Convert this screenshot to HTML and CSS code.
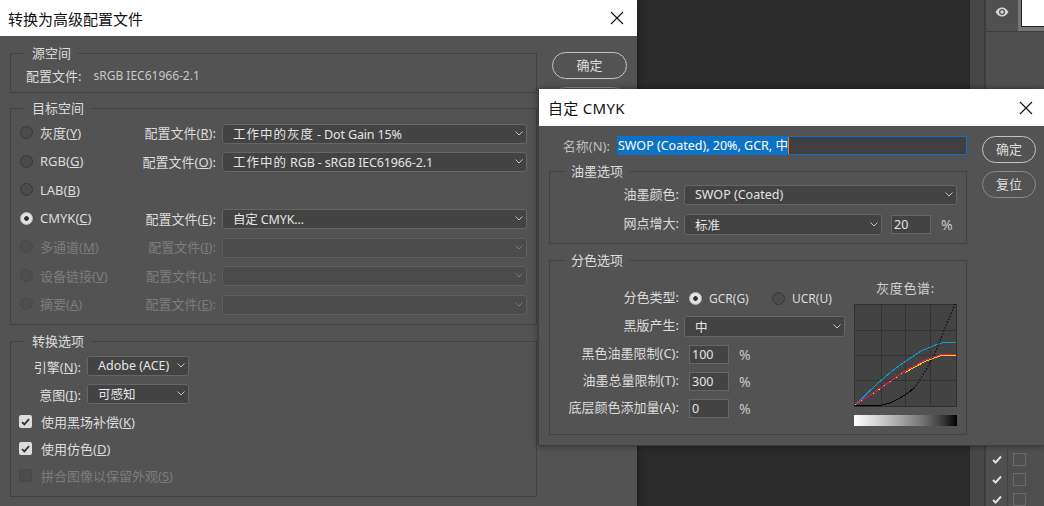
FILE: index.html
```html
<!DOCTYPE html>
<html lang="zh">
<head>
<meta charset="utf-8">
<title>转换为高级配置文件</title>
<link rel="stylesheet" href="styles.css">
</head>
<body>
<div class="desktop">
  <div class="canvas"></div>
  <div class="gutter"></div>
  <aside class="layers">
    <div class="layer-row">
      <div class="eye-cell">
        <svg class="eye" viewBox="0 0 14 10" width="14" height="10"><path d="M0.5 5C2.5 1.8 4.6 0.5 7 0.5S11.5 1.8 13.5 5C11.5 8.2 9.4 9.5 7 9.5S2.5 8.2 0.5 5Z" fill="#d8d8d8"/><circle cx="7" cy="5" r="3" fill="#535353"/><circle cx="7" cy="5" r="1.7" fill="#d8d8d8"/></svg>
      </div>
      <div class="thumb-cell"><div class="thumb"></div></div>
    </div>
    <div class="layer-space"></div>
    <div class="check-row"><div class="tick-cell"><svg viewBox="0 0 10 9" width="10" height="9"><path d="M1 5L3.6 7.5L9 1.5" class="tick"/></svg></div><div class="box-cell"><span class="empty-box"></span></div></div>
    <div class="check-row"><div class="tick-cell"><svg viewBox="0 0 10 9" width="10" height="9"><path d="M1 5L3.6 7.5L9 1.5" class="tick"/></svg></div><div class="box-cell"><span class="empty-box"></span></div></div>
    <div class="check-row"><div class="tick-cell"><svg viewBox="0 0 10 9" width="10" height="9"><path d="M1 5L3.6 7.5L9 1.5" class="tick"/></svg></div><div class="box-cell"><span class="empty-box"></span></div></div>
  </aside>

  <section class="window convert">
    <header class="titlebar convert-title">
      <span class="title-text">转换为高级配置文件</span>
      <svg class="close" viewBox="0 0 14 14" width="14" height="14"><path d="M1 1L13 13M13 1L1 13"/></svg>
    </header>
    <div class="convert-body">
      <div class="convert-main">
        <fieldset class="group source">
          <legend>源空间</legend>
          <div class="source-row"><span>配置文件:</span><span class="source-value">sRGB IEC61966-2.1</span></div>
        </fieldset>
        <fieldset class="group target">
          <legend>目标空间</legend>
          <div class="target-row">
            <span class="choice"><span class="radio"></span><span>灰度(<u>Y</u>)</span></span>
            <span class="profile-label">配置文件(<u>R</u>):</span>
            <div class="select wide"><span><span class="cjk">工作中的灰度</span> - Dot Gain 15%</span><svg class="chev" viewBox="0 0 8 5" width="8" height="5"><path d="M0.5 0.5L4 4L7.5 0.5"/></svg></div>
          </div>
          <div class="target-row">
            <span class="choice"><span class="radio"></span><span>RGB(<u>G</u>)</span></span>
            <span class="profile-label">配置文件(<u>O</u>):</span>
            <div class="select wide"><span><span class="cjk">工作中的</span> RGB - sRGB IEC61966-2.1</span><svg class="chev" viewBox="0 0 8 5" width="8" height="5"><path d="M0.5 0.5L4 4L7.5 0.5"/></svg></div>
          </div>
          <div class="target-row">
            <span class="choice"><span class="radio"></span><span>LAB(<u>B</u>)</span></span>
          </div>
          <div class="target-row">
            <span class="choice"><span class="radio on"></span><span>CMYK(<u>C</u>)</span></span>
            <span class="profile-label">配置文件(<u>E</u>):</span>
            <div class="select wide"><span>自定 CMYK...</span><svg class="chev" viewBox="0 0 8 5" width="8" height="5"><path d="M0.5 0.5L4 4L7.5 0.5"/></svg></div>
          </div>
          <div class="target-row off">
            <span class="choice"><span class="radio"></span><span>多通道(<u>M</u>)</span></span>
            <span class="profile-label">配置文件(<u>I</u>):</span>
            <div class="select wide"><span></span><svg class="chev" viewBox="0 0 8 5" width="8" height="5"><path d="M0.5 0.5L4 4L7.5 0.5"/></svg></div>
          </div>
          <div class="target-row off">
            <span class="choice"><span class="radio"></span><span>设备链接(<u>V</u>)</span></span>
            <span class="profile-label">配置文件(<u>L</u>):</span>
            <div class="select wide"><span></span><svg class="chev" viewBox="0 0 8 5" width="8" height="5"><path d="M0.5 0.5L4 4L7.5 0.5"/></svg></div>
          </div>
          <div class="target-row off">
            <span class="choice"><span class="radio"></span><span>摘要(<u>A</u>)</span></span>
            <span class="profile-label">配置文件(<u>E</u>):</span>
            <div class="select wide"><span></span><svg class="chev" viewBox="0 0 8 5" width="8" height="5"><path d="M0.5 0.5L4 4L7.5 0.5"/></svg></div>
          </div>
        </fieldset>
        <fieldset class="group options">
          <legend>转换选项</legend>
          <div class="option-row">
            <span class="option-label">引擎(<u>N</u>):</span>
            <div class="select narrow"><span>Adobe (ACE)</span><svg class="chev" viewBox="0 0 8 5" width="8" height="5"><path d="M0.5 0.5L4 4L7.5 0.5"/></svg></div>
          </div>
          <div class="option-row">
            <span class="option-label">意图(<u>I</u>):</span>
            <div class="select narrow"><span>可感知</span><svg class="chev" viewBox="0 0 8 5" width="8" height="5"><path d="M0.5 0.5L4 4L7.5 0.5"/></svg></div>
          </div>
          <div class="check-line"><span class="check"><svg viewBox="0 0 9 8" width="9" height="8"><path d="M1 4.2L3.4 6.4L8 1.2"/></svg></span><span>使用黑场补偿(<u>K</u>)</span></div>
          <div class="check-line"><span class="check"><svg viewBox="0 0 9 8" width="9" height="8"><path d="M1 4.2L3.4 6.4L8 1.2"/></svg></span><span>使用仿色(<u>D</u>)</span></div>
          <div class="check-line off"><span class="check blank"></span><span>拼合图像以保留外观(<u>S</u>)</span></div>
        </fieldset>
      </div>
      <div class="convert-actions">
        <button class="btn primary">确定</button>
        <button class="btn" aria-label="复位"></button>
      </div>
    </div>
  </section>

  <section class="window cmyk">
    <header class="titlebar cmyk-title">
      <span class="title-text">自定 CMYK</span>
      <svg class="close" viewBox="0 0 14 14" width="14" height="14"><path d="M1 1L13 13M13 1L1 13"/></svg>
    </header>
    <div class="cmyk-body">
      <div class="cmyk-main">
        <div class="name-row">
          <span class="name-label">名称(N):</span>
          <div class="name-input"><span class="selected">SWOP (Coated), 20%, GCR, 中</span><span class="caret"></span></div>
        </div>
        <fieldset class="group ink">
          <legend>油墨选项</legend>
          <div class="form-row">
            <span class="form-label">油墨颜色:</span>
            <div class="select ink-select"><span>SWOP (Coated)</span><svg class="chev" viewBox="0 0 8 5" width="8" height="5"><path d="M0.5 0.5L4 4L7.5 0.5"/></svg></div>
          </div>
          <div class="form-row dot-row">
            <span class="form-label">网点增大:</span>
            <div class="select dot-select"><span>标准</span><svg class="chev" viewBox="0 0 8 5" width="8" height="5"><path d="M0.5 0.5L4 4L7.5 0.5"/></svg></div>
            <div class="num dot-num">20</div>
            <span class="pct">%</span>
          </div>
        </fieldset>
        <fieldset class="group sep">
          <legend>分色选项</legend>
          <div class="sep-layout">
            <div class="sep-form">
              <div class="form-row h20">
                <span class="form-label">分色类型:</span>
                <span class="radio-option"><span class="radio on"></span><span>GCR(G)</span></span>
                <span class="radio-option"><span class="radio"></span><span>UCR(U)</span></span>
              </div>
              <div class="form-row">
                <span class="form-label">黑版产生:</span>
                <div class="select black-select"><span>中</span><svg class="chev" viewBox="0 0 8 5" width="8" height="5"><path d="M0.5 0.5L4 4L7.5 0.5"/></svg></div>
              </div>
              <div class="form-row">
                <span class="form-label">黑色油墨限制(C):</span>
                <div class="num limit">100</div><span class="pct">%</span>
              </div>
              <div class="form-row">
                <span class="form-label">油墨总量限制(T):</span>
                <div class="num limit">300</div><span class="pct">%</span>
              </div>
              <div class="form-row">
                <span class="form-label">底层颜色添加量(A):</span>
                <div class="num limit">0</div><span class="pct">%</span>
              </div>
            </div>
            <div class="gamut">
              <div class="gamut-label">灰度色谱:</div>
              <svg class="graph" viewBox="0 0 103 103" width="103" height="103">
                <rect x="0.5" y="0.5" width="102" height="102" class="g-frame"/>
                <path d="M27.5 0V103M51.5 0V103M76.5 0V103M0 26.5H103M0 51.5H103M0 76.5H103" class="g-grid"/>
                <polyline points="1,101 24,79 37,68 49,59 67,47 84,40 92,38 102,38" class="g-cyan"/>
                <polyline points="51,68.5 71,57.5 87,51.5 94,51.5 102,51.5" class="g-yellow"/>
                <polyline points="1,101 24,86 51,67 71,56 87,50.5 94,50.5 102,50.5" class="g-magenta"/>
                <polyline points="1,101 24,86 51,67" class="g-yellow dashed"/>
                <polyline points="1,101.5 26,101.5 36,99 46,94 54,89 60,84" class="g-black"/>
                <polyline points="60,84 64,79 72,66 81,49 91,24 101,0" class="g-dots"/>
              </svg>
              <div class="ramp"></div>
            </div>
          </div>
        </fieldset>
      </div>
      <div class="cmyk-actions">
        <button class="btn small primary">确定</button>
        <button class="btn small">复位</button>
      </div>
    </div>
  </section>
</div>
</body>
</html>
```
FILE: styles.css
```css
* { box-sizing: border-box; }
html, body { margin: 0; padding: 0; }
body {
  width: 1044px;
  height: 506px;
  overflow: hidden;
  background: #292929;
  font-family: "Noto Sans", "Noto Sans CJK SC", sans-serif;
  font-size: 13px;
  color: #dcdcdc;
}
u { text-decoration: underline; text-underline-offset: 1px; }

.desktop {
  position: relative;
  width: 1044px;
  height: 506px;
  overflow: hidden;
  display: flex;
  justify-content: flex-end;
}
.canvas { flex: 1; background: #2a2a2a; }
.gutter { width: 16px; background: #474747; border-right: 2px solid #3b3b3b; }
.layers {
  width: 58px;
  height: 509px;
  flex: none;
  background: #4f4f4f;
  display: flex;
  flex-direction: column;
}
.layer-row { height: 32px; display: flex; border-bottom: 1px solid #3e3e3e; flex: none; }
.eye-cell { width: 32px; display: flex; align-items: center; justify-content: center; padding-bottom: 7px; background: #505050; }
.thumb-cell { flex: 1; background: #777; padding: 0 0 4px 3px; }
.thumb { height: 100%; background: #fff; border: 1px solid #222; border-top: 0; border-right: 0; }
.layer-space { flex: 1; }
.check-row { height: 20px; display: flex; flex: none; }
.tick-cell { width: 22px; display: flex; align-items: center; justify-content: center; border-right: 1px solid #424242; }
.box-cell { flex: 1; padding: 4px 0 0 5px; }
.empty-box { display: block; width: 13px; height: 13px; border: 1px solid #6a6a6a; }
.tick { fill: none; stroke: #dedede; stroke-width: 2; }

.window {
  position: absolute;
  background: #535353;
  display: flex;
  flex-direction: column;
  box-shadow: 0 0 6px rgba(0, 0, 0, .45);
}
.convert { left: 0; top: 0; width: 637px; height: 506px; }
.cmyk { left: 538px; top: 89px; width: 506px; height: 357px; border-left: 1px solid #3c3c3c; border-bottom: 1px solid #3c3c3c; }

.titlebar {
  background: #fff;
  color: #111;
  display: flex;
  align-items: center;
  justify-content: space-between;
  flex: none;
  font-size: 15px;
}
.convert-title { height: 36px; padding: 0 13px 0 8px; }
.cmyk-title { height: 37px; padding: 0 11px 0 9px; letter-spacing: .3px; }
.close path { stroke: #111; stroke-width: 1.1; fill: none; }

.group {
  border: 1px solid #424242;
  margin: 0;
  padding: 0;
  min-width: 0;
}
.group legend {
  margin-left: 14px;
  padding: 0 7px;
  line-height: 16px;
  font-size: 13px;
  color: #dcdcdc;
}

.convert-body { flex: 1; display: flex; padding: 9px 10px 0 10px; gap: 15px; }
.convert-main { width: 527px; display: flex; flex-direction: column; gap: 7px; flex: none; }
.convert-actions { display: flex; flex-direction: column; gap: 8px; padding-top: 7px; }

.source { height: 48px; padding-top: 5px; }
.source-row { display: flex; height: 18px; align-items: center; padding-left: 15px; }
.source-value { margin-left: 12px; color: #c8c8c8; font-size: 12px; }

.target { height: 225px; padding-top: 3.5px; }
.target-row { height: 28.5px; display: flex; align-items: center; padding-left: 9px; }
.choice { width: 120px; display: flex; align-items: center; gap: 7px; flex: none; padding-bottom: 2px; }
.profile-label { width: 76px; text-align: right; white-space: nowrap; flex: none; padding-bottom: 2px; }
.target-row .select { margin-left: 6px; }
.off { color: #7c7c7c; }
.off .radio { background: #4e4e4e; border-color: #484848; }
.off .select { background: #4b4b4b; border-color: #5f5f5f; }
.off .chev path { stroke: #7a7a7a; }

.radio {
  display: block;
  width: 13px;
  height: 13px;
  border-radius: 50%;
  border: 1px solid #383838;
  background: #4b4b4b;
  flex: none;
}
.radio.on {
  background: radial-gradient(circle, #2e2e2e 0 2px, #e2e2e2 2.6px);
  border-color: #bdbdbd;
}

.select {
  height: 20px;
  background: #434343;
  border: 1px solid #666;
  border-radius: 3px;
  display: flex;
  align-items: center;
  justify-content: space-between;
  padding: 0 3px 1px 10px;
  flex: none;
  white-space: nowrap;
  font-size: 12.5px;
  color: #e4e4e4;
}
.wide { width: 305px; letter-spacing: -.15px; }
.cjk { letter-spacing: 1px; }
.narrow { width: 102px; }
.chev { flex: none; }
.chev path { fill: none; stroke: #c0c0c0; stroke-width: 1; }

.options { height: 164px; padding-top: 3px; margin-top: 1px; }
.option-row { height: 28px; display: flex; align-items: center; gap: 6px; padding-left: 8px; }
.option-label { width: 62px; text-align: right; flex: none; white-space: nowrap; }
.check-line { height: 27px; display: flex; align-items: center; gap: 9px; padding-left: 8px; }
.check {
  width: 13px;
  height: 13px;
  border-radius: 2px;
  background: #dcdcdc;
  display: flex;
  align-items: center;
  justify-content: center;
  flex: none;
}
.check path { fill: none; stroke: #333; stroke-width: 1.8; }
.check.blank { background: #4c4c4c; border: 1px solid #484848; }

.btn {
  width: 75px;
  height: 27px;
  border-radius: 14px;
  border: 1px solid #8a8a8a;
  background: #535353;
  color: #dcdcdc;
  font: inherit;
  padding: 0 0 2px;
}
.btn.primary { border: 1.5px solid #c4c4c4; }
.btn.small { width: 54px; }

.cmyk-body { flex: 1; display: flex; padding: 10px 8px 0 10px; gap: 15px; }
.cmyk-main { width: 418px; display: flex; flex-direction: column; gap: 8px; flex: none; }
.cmyk-actions { display: flex; flex-direction: column; gap: 8px; }

.name-row { height: 19px; display: flex; align-items: center; gap: 7px; flex: none; }
.name-label { width: 61px; text-align: right; color: #bdbdbd; flex: none; white-space: nowrap; }
.name-input {
  width: 351px;
  height: 19px;
  background: #3f3f3f;
  border: 1px solid #0d6fd0;
  display: flex;
  align-items: center;
  white-space: nowrap;
  font-size: 12.5px;
}
.selected { background: #0d72c4; color: #fff; line-height: 17px; }
.caret { width: 1px; height: 17px; background: #e8801f; }

.ink { height: 81px; padding-top: 6px; display: flex; flex-direction: column; gap: 9px; }
.sep { height: 183px; padding: 0; }
.form-row { display: flex; align-items: center; gap: 5px; flex: none; height: 19px; }
.form-row:has(.select) { height: 21px; }
.form-row:has(.ink-select) { height: 20px; }
.h20 { height: 20px; }
.form-label { width: 129px; text-align: right; flex: none; white-space: nowrap; line-height: 17px; padding-bottom: 2px; }
.ink-select { width: 273px; }
.dot-select { width: 198px; height: 21px; }
.dot-row { gap: 0; }
.dot-row .form-label { margin-right: 5px; }
.dot-num { margin-left: 9px; }
.num {
  width: 40px;
  height: 19px;
  background: #434343;
  border: 1px solid #666;
  color: #e4e4e4;
  display: flex;
  align-items: center;
  padding-left: 2px;
  font-size: 12.5px;
  flex: none;
}
.limit { margin-left: 5px; }
.pct { margin-left: 5px; color: #c8c8c8; font-size: 14px; line-height: 17px; }
.dot-row .pct { margin-left: 10px; }

.sep-layout { display: flex; gap: 9px; }
.sep-form { width: 295px; padding-top: 20px; display: flex; flex-direction: column; gap: 8px; }
.radio-option { width: 83px; display: flex; align-items: center; gap: 7px; flex: none; font-size: 12px; }
.form-row .radio-option:nth-child(2) { margin-left: 5px; }
.radio-option + .radio-option { margin-left: -5px; }
.black-select { width: 161px; height: 21px; }

.gamut { width: 103px; padding-top: 12px; display: flex; flex-direction: column; gap: 8px; }
.gamut-label { height: 16px; line-height: 16px; text-align: center; color: #cfcfcf; white-space: nowrap; letter-spacing: .6px; }
.graph { display: block; }
.graph polyline { fill: none; stroke-width: 1; shape-rendering: crispEdges; }
.g-frame { fill: #434343; stroke: #2f2f2f; }
.g-grid { stroke: #333; stroke-width: 1; fill: none; }
.graph .g-cyan { stroke: #0e9bd0; }
.graph .g-magenta { stroke: #ee1166; }
.graph .g-yellow { stroke: #ffd400; }
.graph .dashed { stroke-dasharray: 1 6; }
.graph .g-black { stroke: #000; }
.graph .g-dots { stroke: #000; stroke-width: 1.2; stroke-dasharray: 1.2 2; shape-rendering: auto; }
.ramp { height: 11px; background: linear-gradient(to right, #fff, #bbb 35%, #777 65%, #333 88%, #000); }
```
